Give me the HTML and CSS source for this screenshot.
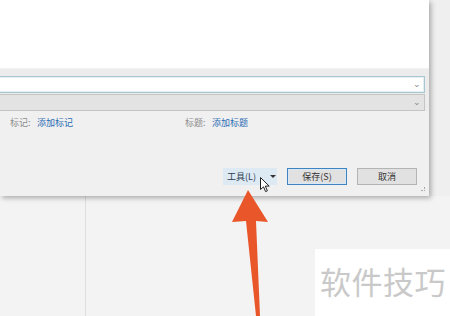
FILE: index.html
```html
<!DOCTYPE html>
<html lang="zh-CN">
<head>
  <meta charset="UTF-8">
  <meta name="viewport" content="width=device-width, initial-scale=1.0">
  <title>保存</title>
  <link rel="stylesheet" href="styles.css">
</head>
<body>

  <div class="screen">
    <section class="dialog">
      <div class="preview"></div>

      <div class="fields">
        <div class="field field-name"><span class="chev">&#8964;</span></div>
        <div class="field field-type"><span class="chev">&#8964;</span></div>
      </div>

      <div class="meta">
        <div class="meta-item">
          <span class="meta-label">标记:</span>
          <a href="#">添加标记</a>
        </div>
        <div class="meta-item">
          <span class="meta-label">标题:</span>
          <a href="#">添加标题</a>
        </div>
      </div>

      <div class="actions">
        <button class="btn btn-tools">工具(L)<span class="caret"></span></button>
        <button class="btn btn-primary">保存(S)</button>
        <button class="btn">取消</button>
      </div>

      <span class="grip"></span>
    </section>

    <div class="backdrop">
      <div class="side"></div>
    </div>

    <div class="watermark">软件技巧</div>

    <!-- annotation arrow -->
    <svg class="arrow" width="450" height="316" viewBox="0 0 450 316">
      <polygon points="248,190 268,222 256,221 260,316 256,316 246,221 232,222" fill="#e8562a"/>
    </svg>

    <!-- mouse pointer -->
    <svg class="cursor" width="12" height="16" viewBox="0 0 12 16">
      <path d="M0.5 0.5 L0.5 12.5 L3.5 9.8 L5.6 14.6 L7.4 13.8 L5.3 9.1 L9.2 9.1 Z" fill="#fff" stroke="#222" stroke-width="1" stroke-linejoin="round"/>
    </svg>
  </div>

</body>
</html>
```

FILE: styles.css
```css
/* General Styles */
* {
  margin: 0;
  padding: 0;
  box-sizing: border-box;
  font-family: "Noto Sans CJK SC", "Liberation Sans", sans-serif;
}

body {
  background-color: #f2f2f2;
}

.screen {
  position: relative;
  width: 450px;
  height: 316px;
  overflow: hidden;
  background-color: #efefef;
}

/* Save dialog */
.dialog {
  position: relative;
  width: 429px;
  height: 196px;
  background-color: #f0f0f0;
  box-shadow: 2px 2px 5px rgba(0, 0, 0, 0.3);
  z-index: 1;
}

.preview {
  height: 69px;
  background-color: #ffffff;
  border-bottom: 1px solid #f6f1f2;
}

.fields {
  display: flex;
  flex-direction: column;
  gap: 1px;
  padding: 7px 4px 0 0;
  background-color: #ececec;
}

.field {
  position: relative;
  height: 17px;
  margin-left: -2px;
  border: 1px solid #a9c7d0;
  background-color: #ffffff;
}

.field-name {
  box-shadow: inset 0 0 0 1px #e3eff3;
}

.field-type {
  background-color: #e3e3e3;
  border-color: #c4c4c4;
}

.chev {
  position: absolute;
  right: 3px;
  top: -2px;
  font-size: 9px;
  color: #8a8a8a;
  line-height: 17px;
}

.meta {
  display: flex;
  height: 12px;
  margin-top: 6px;
  padding-left: 10px;
  font-size: 9px;
  line-height: 12px;
}

.meta-item {
  width: 175px;
  display: flex;
}

.meta-label {
  width: 27px;
  color: #8c8c8c;
}

.meta a {
  color: #2b6cb3;
  text-decoration: none;
}

.actions {
  display: flex;
  justify-content: flex-end;
  gap: 10px;
  margin-top: 39px;
  padding-right: 12px;
}

.btn {
  width: 60px;
  height: 17px;
  font-size: 9px;
  color: #333333;
  background-color: #e1e1e1;
  border: 1px solid #b4b4b4;
}

.btn-tools {
  width: 54px;
  display: flex;
  align-items: center;
  padding-left: 3px;
  background-color: #dde9f3;
  border-color: #dde9f3;
  color: #2d3d52;
}

.caret {
  margin-left: 14px;
  width: 0;
  height: 0;
  border-left: 3px solid transparent;
  border-right: 3px solid transparent;
  border-top: 3px solid #333333;
}

.btn-primary {
  border: 1px solid #3d84c0;
  box-shadow: inset 0 0 0 1px #d9e8f5;
}

.grip {
  position: absolute;
  right: 4px;
  bottom: 5px;
  width: 4px;
  height: 4px;
  border-right: 1px dotted #aaaaaa;
  border-bottom: 1px dotted #aaaaaa;
}

/* App behind the dialog */
.backdrop {
  height: 120px;
  background-color: #f3f3f3;
}

.side {
  width: 86px;
  height: 100%;
  border-right: 1px solid #dedede;
}

.watermark {
  position: absolute;
  left: 315px;
  top: 249px;
  width: 135px;
  height: 67px;
  padding: 12px 0 0 5px;
  background-color: #ffffff;
  color: #c9c9c9;
  font-size: 31px;
  letter-spacing: 0.5px;
  line-height: 40px;
}

.arrow {
  position: absolute;
  left: 0;
  top: 0;
  z-index: 2;
}

.cursor {
  position: absolute;
  left: 260px;
  top: 177px;
  z-index: 3;
}
```
